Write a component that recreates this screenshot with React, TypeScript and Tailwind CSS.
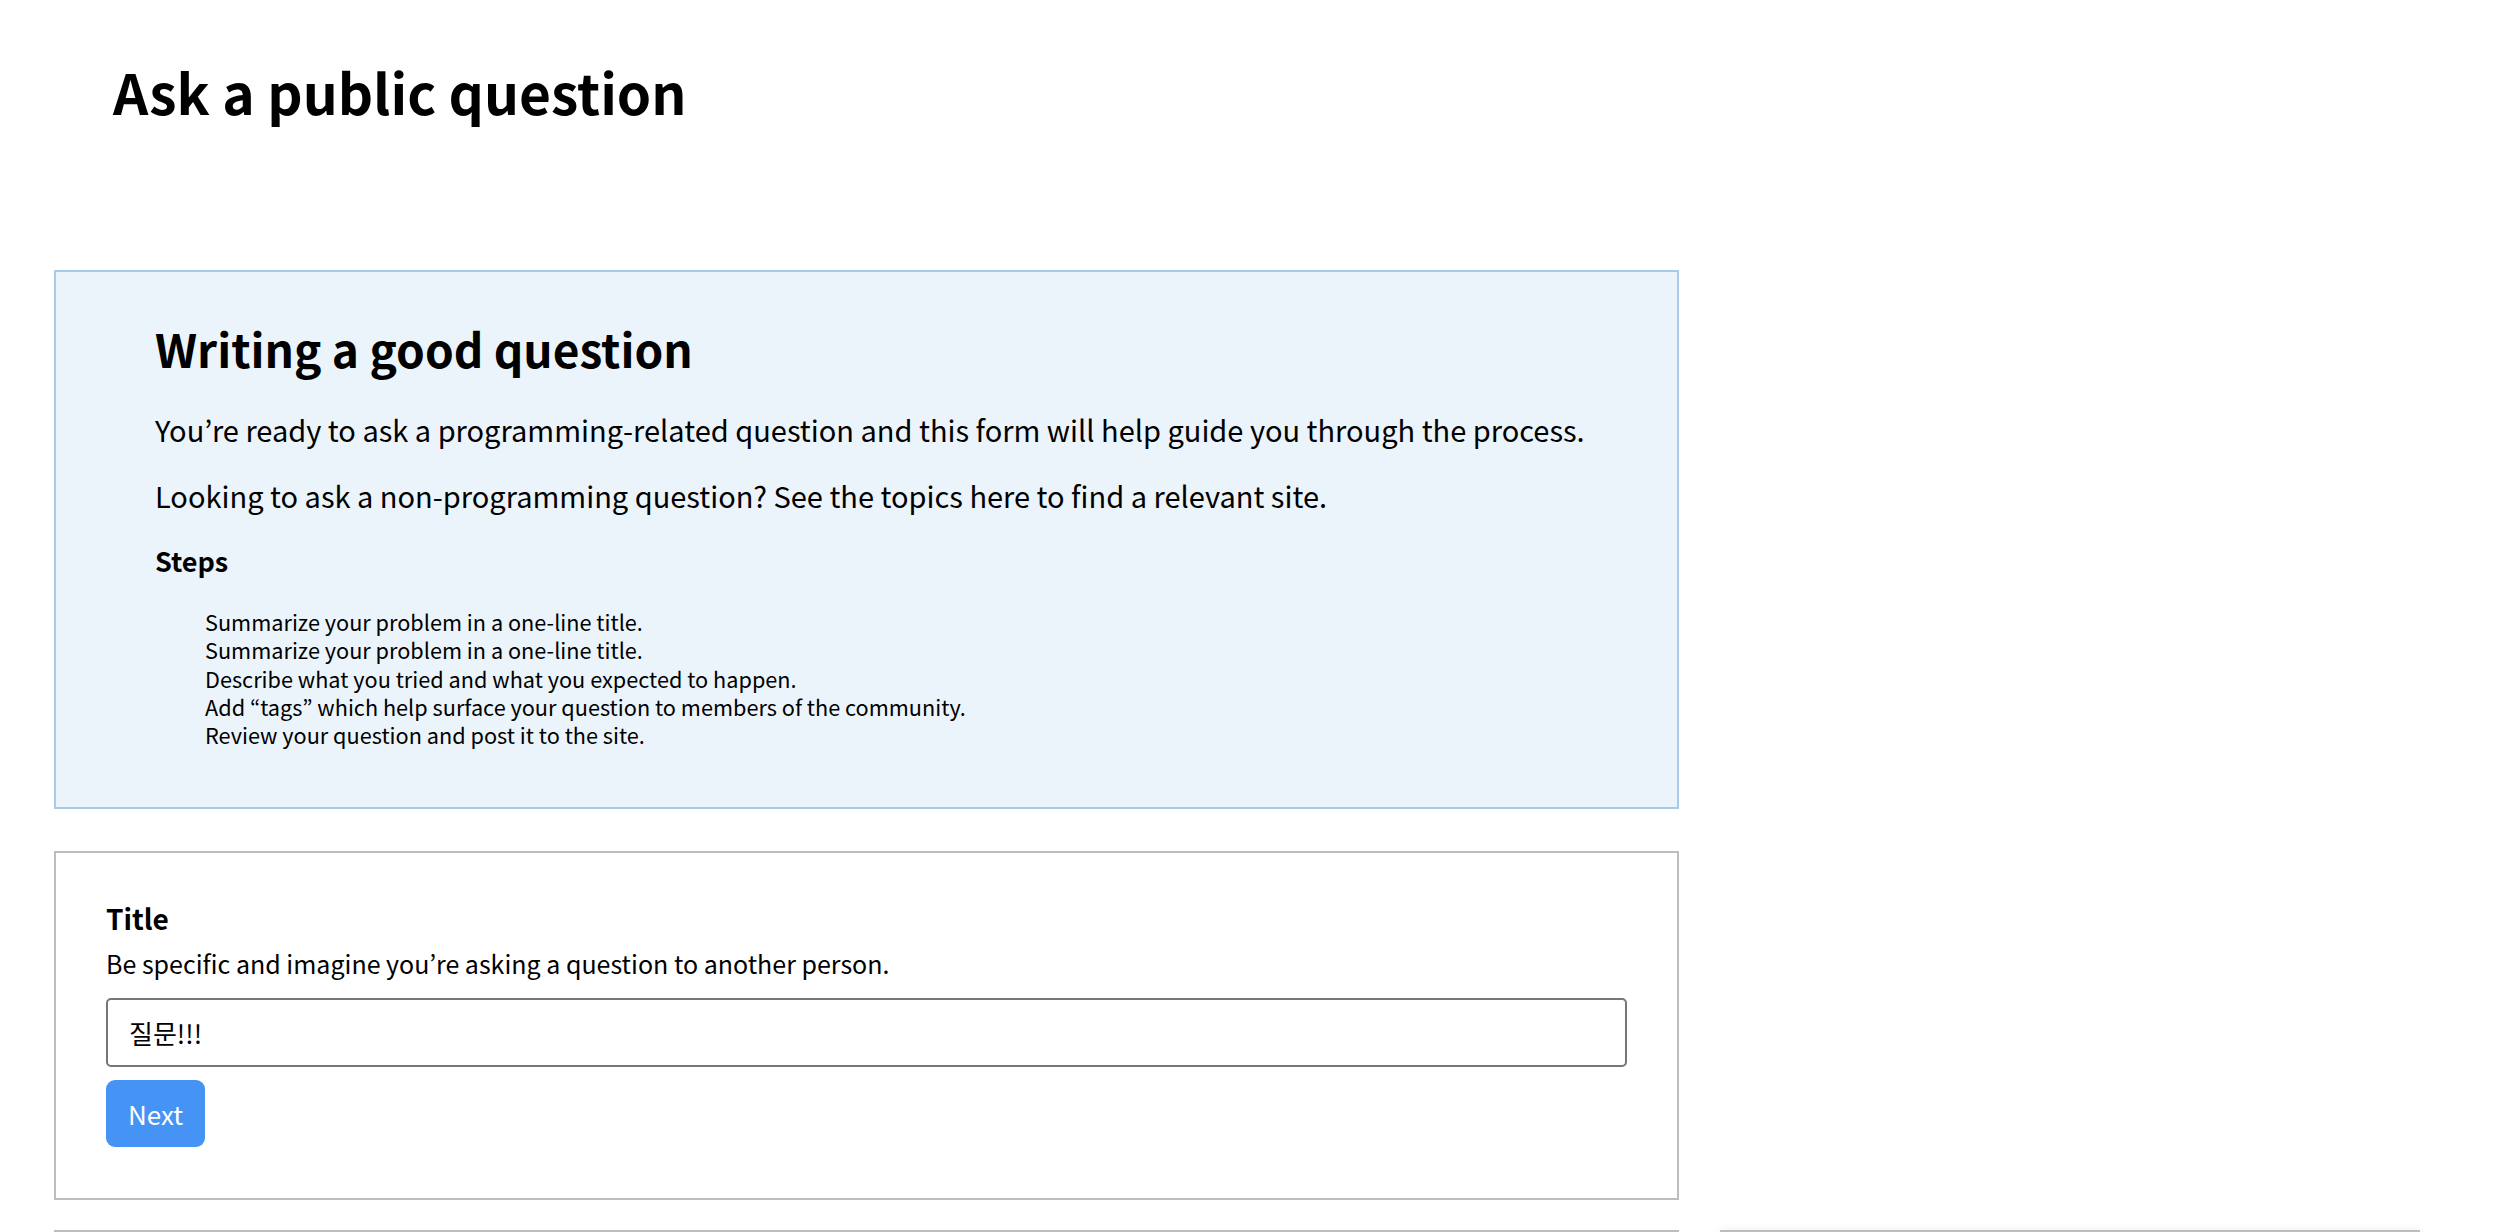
import { useState } from 'react';

const steps = [
  'Summarize your problem in a one-line title.',
  'Summarize your problem in a one-line title.',
  'Describe what you tried and what you expected to happen.',
  'Add “tags” which help surface your question to members of the community.',
  'Review your question and post it to the site.',
];

export default function App() {
  const [title, setTitle] = useState('질문!!!');

  return (
    <div className="h-screen overflow-hidden bg-white text-black font-['Noto_Sans_CJK_KR','Noto_Sans',sans-serif]">
      <h1 className="pl-[113px] pt-[64px] text-[55px] leading-[55px] font-bold">Ask a public question</h1>

      <div className="mt-[151px] pl-[54px]">
        {/* guide */}
        <div className="w-[1625px] border-2 border-[#a9cbe9] bg-[#ecf4fb] pl-[99px] pt-[52px] pb-[58px]">
          <h2 className="text-[46px] leading-[48px] font-bold">Writing a good question</h2>
          <p className="mt-[37px] text-[29px] leading-[40px]">
            You’re ready to ask a programming-related question and this form will help guide you through the process.
          </p>
          <p className="mt-[26px] text-[29px] leading-[40px]">
            Looking to ask a non-programming question? See the topics here to find a relevant site.
          </p>
          <h4 className="mt-[28px] text-[27px] leading-[36px] font-bold">Steps</h4>
          <ul className="mt-[29px] pl-[50px] text-[21.7px] leading-[28.3px]">
            {steps.map((s, i) => (
              <li key={i}>{s}</li>
            ))}
          </ul>
        </div>

        {/* title section */}
        <div className="mt-[42px] w-[1625px] border-2 border-[#bdbdbd] px-[50px] pt-[47px] pb-[51px]">
          <h3 className="text-[28px] leading-[36px] font-bold">Title</h3>
          <p className="mt-[11px] text-[25px] leading-[33px]">
            Be specific and imagine you’re asking a question to another person.
          </p>
          <input
            value={title}
            onChange={(e) => setTitle(e.target.value)}
            className="mt-[18px] block w-full h-[69px] rounded-[5px] border-2 border-[#767676] px-[21px] text-[26px] outline-none"
          />
          <button className="mt-[13px] h-[67px] w-[99px] rounded-[9px] bg-[#4593f5] text-[26px] text-white">
            Next
          </button>
        </div>

        {/* next section + sidebar */}
        <div className="mt-[30px] flex gap-[41px]">
          <div className="w-[1625px] h-[300px] border-2 border-[#bdbdbd]" />
          <div className="w-[700px] h-[300px] border-t-2 border-[#bdbdbd] bg-white shadow-[0_0_10px_rgba(0,0,0,0.07)]" />
        </div>
      </div>
    </div>
  );
}
